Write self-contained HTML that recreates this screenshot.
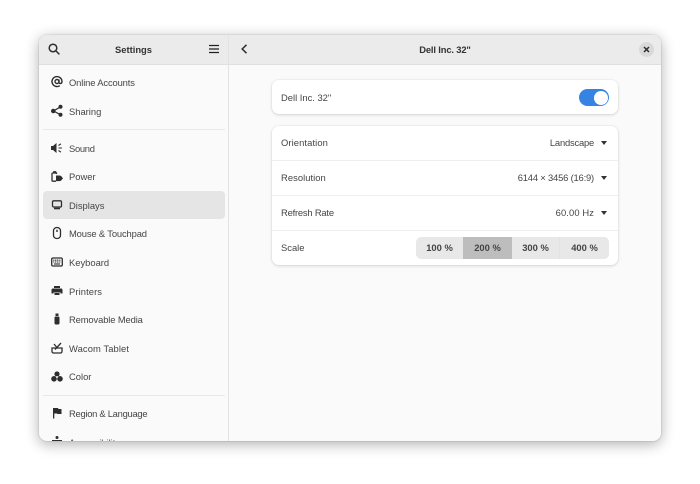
<!DOCTYPE html>
<html>
<head>
<meta charset="utf-8">
<style>
html,body{margin:0;padding:0;width:700px;height:484px;overflow:hidden;background:#fff}
body{font-family:"Liberation Sans",sans-serif;font-size:9.4px;color:#454545;position:relative}
#win{position:absolute;left:39px;top:35px;width:622px;height:406px;border-radius:8px;overflow:hidden;background:#fafafa;box-shadow:0 0 0 1px rgba(0,0,0,.06),0 3px 14px rgba(0,0,0,.32)}
.a{position:absolute}
.hdr{position:absolute;left:0;top:0;width:622px;height:30px;background:#ebebeb;border-bottom:1px solid #e0e0e0;box-sizing:border-box}
.vd{position:absolute;left:189px;top:0;width:1px;height:406px;background:#e3e3e3}
.t{position:absolute;white-space:nowrap;line-height:12px;height:12px}
.b{font-weight:700;font-size:9.4px;color:#333}
.sep{position:absolute;left:4px;width:182px;height:1px;background:#e8e8e8}
.sel{position:absolute;left:4px;top:156px;width:182px;height:28px;border-radius:4px;background:#e5e5e5}
.ic{position:absolute;left:11px;width:14px;height:14px}
.card{position:absolute;left:233px;width:346px;background:#fff;border-radius:7px;box-shadow:0 0 0 1px rgba(0,0,0,.025),0 1px 3px rgba(0,0,0,.14)}
.line{position:absolute;left:233px;width:346px;height:1px;background:#efefef}
.arr{position:absolute;width:0;height:0;border-left:3.500px solid transparent;border-right:3.500px solid transparent;border-top:4px solid #333}
.seg{position:absolute;top:202px;height:22px;line-height:22px;text-align:center;font-size:9.400px;font-weight:700;color:#444;background:#e8e8e8}
svg{display:block}
</style>
</head>
<body>
<div id="win">
  <div class="hdr"></div>
  <div class="vd"></div>

  <!-- header left -->
  <svg class="a" style="left:8px;top:7px" width="14" height="14" viewBox="0 0 14 14" fill="none" stroke="#2e2e2e" stroke-width="1.500"><circle cx="6" cy="6" r="3.800"/><path d="M9 9l3.400 3.400"/></svg>
  <div class="t b" style="left:0;width:189px;text-align:center;top:9px">Settings</div>
  <svg class="a" style="left:168px;top:7px" width="14" height="14" viewBox="0 0 14 14" stroke="#222" stroke-width="1.200"><path d="M2 3.500h10M2 7h10M2 10.500h10"/></svg>

  <!-- header right -->
  <svg class="a" style="left:198px;top:7px" width="14" height="14" viewBox="0 0 14 14" fill="none" stroke="#2e2e2e" stroke-width="1.500"><path d="M9.500 2.800L5.200 7l4.300 4.200"/></svg>
  <div class="t b" style="left:190px;width:432px;text-align:center;top:9px;letter-spacing:-.15px">Dell Inc. 32"</div>
  <div class="a" style="left:600px;top:7px;width:15px;height:15px;border-radius:50%;background:#d9d9d9"></div>
  <svg class="a" style="left:603px;top:10px" width="9" height="9" viewBox="0 0 9 9" stroke="#2e2e2e" stroke-width="1.500"><path d="M2 2l5 5M7 2l-5 5"/></svg>

  <!-- sidebar -->
  <div class="sel"></div>
  <div class="sep" style="top:94px"></div>
  <div class="sep" style="top:360px"></div>

  <svg class="ic" style="top:40px" viewBox="0 0 14 14" fill="none" stroke="#2e2e2e" stroke-width="1.400"><circle cx="7" cy="6.500" r="2"/><path d="M9 4.500v3c0 1.500 3 1.500 3-1a5 5 0 1 0-2.200 4.200"/></svg>
  <div class="t" style="left:30px;top:42px;letter-spacing:-.13px">Online Accounts</div>

  <svg class="ic" style="top:69px" viewBox="0 0 14 14" fill="#2e2e2e" stroke="#2e2e2e" stroke-width="1.200"><circle cx="3.300" cy="7" r="1.700"/><circle cx="10.500" cy="2.700" r="1.400"/><circle cx="10.500" cy="10.700" r="1.400"/><path d="M3.500 7l7-4.200M3.500 7l7 3.700" fill="none"/></svg>
  <div class="t" style="left:30px;top:71px">Sharing</div>

  <svg class="ic" style="top:106px" viewBox="0 0 14 14" fill="#2e2e2e"><path d="M1 5h2l3.500-3v10L3 9H1z"/><path d="M8.500 4.500L11 2.800M8.500 7h3.500M8.500 9.500L11 11.200" stroke="#2e2e2e" stroke-width="1.100" fill="none"/></svg>
  <div class="t" style="left:30px;top:108px;letter-spacing:-.3px">Sound</div>

  <svg class="ic" style="top:135px" viewBox="0 0 14 14" fill="none" stroke="#2e2e2e" stroke-width="1.300"><path d="M6 11.200H3a1 1 0 0 1-1-1V4a1 1 0 0 1 1-1h3.500v1M3.800 3V1.800h1.800V3"/><path d="M6.500 6h3a2.300 2.300 0 0 1 0 4.600h-3zM10 8.300h3" fill="#2e2e2e" stroke-width="1"/></svg>
  <div class="t" style="left:30px;top:136px">Power</div>

  <svg class="ic" style="top:163px" viewBox="0 0 14 14" fill="none" stroke="#2e2e2e" stroke-width="1.300"><rect x="2.500" y="2.800" width="9" height="6.200" rx="1.300"/><path d="M4 10.500h6" stroke-width="1.600"/></svg>
  <div class="t" style="left:30px;top:165px">Displays</div>

  <svg class="ic" style="top:191px" viewBox="0 0 14 14" fill="none" stroke="#2e2e2e" stroke-width="1.300"><rect x="3.500" y="1.500" width="7" height="11" rx="3.300"/><path d="M7 3.700v2.300" stroke-width="1.400"/></svg>
  <div class="t" style="left:30px;top:193px;letter-spacing:-.14px">Mouse &amp; Touchpad</div>

  <svg class="ic" style="top:220px" viewBox="0 0 14 14" fill="none" stroke="#2e2e2e" stroke-width="1.300"><rect x="1.700" y="3" width="10.600" height="8" rx="1.300"/><path d="M3.200 5.200h7.600M3.200 7h7.600" stroke-width="1.100" stroke-dasharray="1.200 .6"/><path d="M4 9h6" stroke-width="1.100"/></svg>
  <div class="t" style="left:30px;top:222px">Keyboard</div>

  <svg class="ic" style="top:249px" viewBox="0 0 14 14" fill="#2e2e2e"><path d="M4 2h6v2H4z"/><path d="M3 4.500h8A1.500 1.500 0 0 1 12.500 6v3.500h-2v-1h-7v1h-2V6A1.500 1.500 0 0 1 3 4.500z"/><path d="M4.500 9h5v2H4.500z"/></svg>
  <div class="t" style="left:30px;top:251px;letter-spacing:.1px">Printers</div>

  <svg class="ic" style="top:277px" viewBox="0 0 14 14" fill="#2e2e2e"><path d="M5.500 1.500h3V4h-3z"/><rect x="4.500" y="4.500" width="5" height="8" rx="1.200"/></svg>
  <div class="t" style="left:30px;top:279px;letter-spacing:-.12px">Removable Media</div>

  <svg class="ic" style="top:306px" viewBox="0 0 14 14" fill="none" stroke="#2e2e2e" stroke-width="1.300"><path d="M2 7h10v3.500a1.500 1.500 0 0 1-1.500 1.500h-7A1.500 1.500 0 0 1 2 10.500z"/><path d="M5 8.500l6-6.500M4 3l2.500 3"/></svg>
  <div class="t" style="left:30px;top:308px;letter-spacing:.1px">Wacom Tablet</div>

  <svg class="ic" style="top:335px" viewBox="0 0 14 14" fill="#2e2e2e"><circle cx="7" cy="4" r="2.600"/><circle cx="4" cy="8.800" r="2.800"/><circle cx="10" cy="8.800" r="2.800"/><circle cx="7" cy="7" r="1" fill="#fafafa"/></svg>
  <div class="t" style="left:30px;top:336px">Color</div>

  <svg class="ic" style="top:371px" viewBox="0 0 14 14" fill="#2e2e2e"><path d="M3 2h1.300v10.500H3z"/><path d="M4 2h4l.5 1H11.500v5H7.500L7 7.500H4z"/></svg>
  <div class="t" style="left:30px;top:373px;letter-spacing:-.27px">Region &amp; Language</div>

  <svg class="ic" style="top:400px" viewBox="0 0 14 14" fill="#2e2e2e"><circle cx="7" cy="2.500" r="1.500"/><path d="M2 5h10v1.300H8.500V9l1.500 4H8.500L7 10l-1.500 3H4l1.500-4V6.300H2z"/></svg>
  <div class="t" style="left:30px;top:402px">Accessibility</div>

  <!-- cards -->
  <div class="card" style="top:45px;height:34px"></div>
  <div class="t" style="left:242px;top:57px">Dell Inc. 32"</div>
  <div class="a" style="left:540px;top:54px;width:30px;height:17px;border-radius:9px;background:#3584e4"></div>
  <div class="a" style="left:555px;top:55.500px;width:14px;height:14px;border-radius:50%;background:#fff"></div>

  <div class="card" style="top:91px;height:139px"></div>
  <div class="line" style="top:125px"></div>
  <div class="line" style="top:160px"></div>
  <div class="line" style="top:195px"></div>

  <div class="t" style="left:242px;top:102px;letter-spacing:.1px">Orientation</div>
  <div class="t" style="right:67px;top:102px;letter-spacing:-.2px">Landscape</div>
  <div class="arr" style="left:561.500px;top:106px"></div>

  <div class="t" style="left:242px;top:137px;letter-spacing:.05px">Resolution</div>
  <div class="t" style="right:67px;top:137px;letter-spacing:-.18px">6144 × 3456 (16:9)</div>
  <div class="arr" style="left:561.500px;top:141px"></div>

  <div class="t" style="left:242px;top:172px;letter-spacing:-.2px">Refresh Rate</div>
  <div class="t" style="right:67px;top:172px;letter-spacing:.1px">60.00 Hz</div>
  <div class="arr" style="left:561.500px;top:176px"></div>

  <div class="t" style="left:242px;top:207px">Scale</div>
  <div class="seg" style="left:377px;width:47px;border-radius:5px 0 0 5px">100 %</div>
  <div class="seg" style="left:424px;width:49px;background:#bdbdbd">200 %</div>
  <div class="seg" style="left:473px;width:47px;border-right:1px solid #e2e2e2">300 %</div>
  <div class="seg" style="left:521px;width:49px;border-radius:0 5px 5px 0">400 %</div>
</div>
</body>
</html>
